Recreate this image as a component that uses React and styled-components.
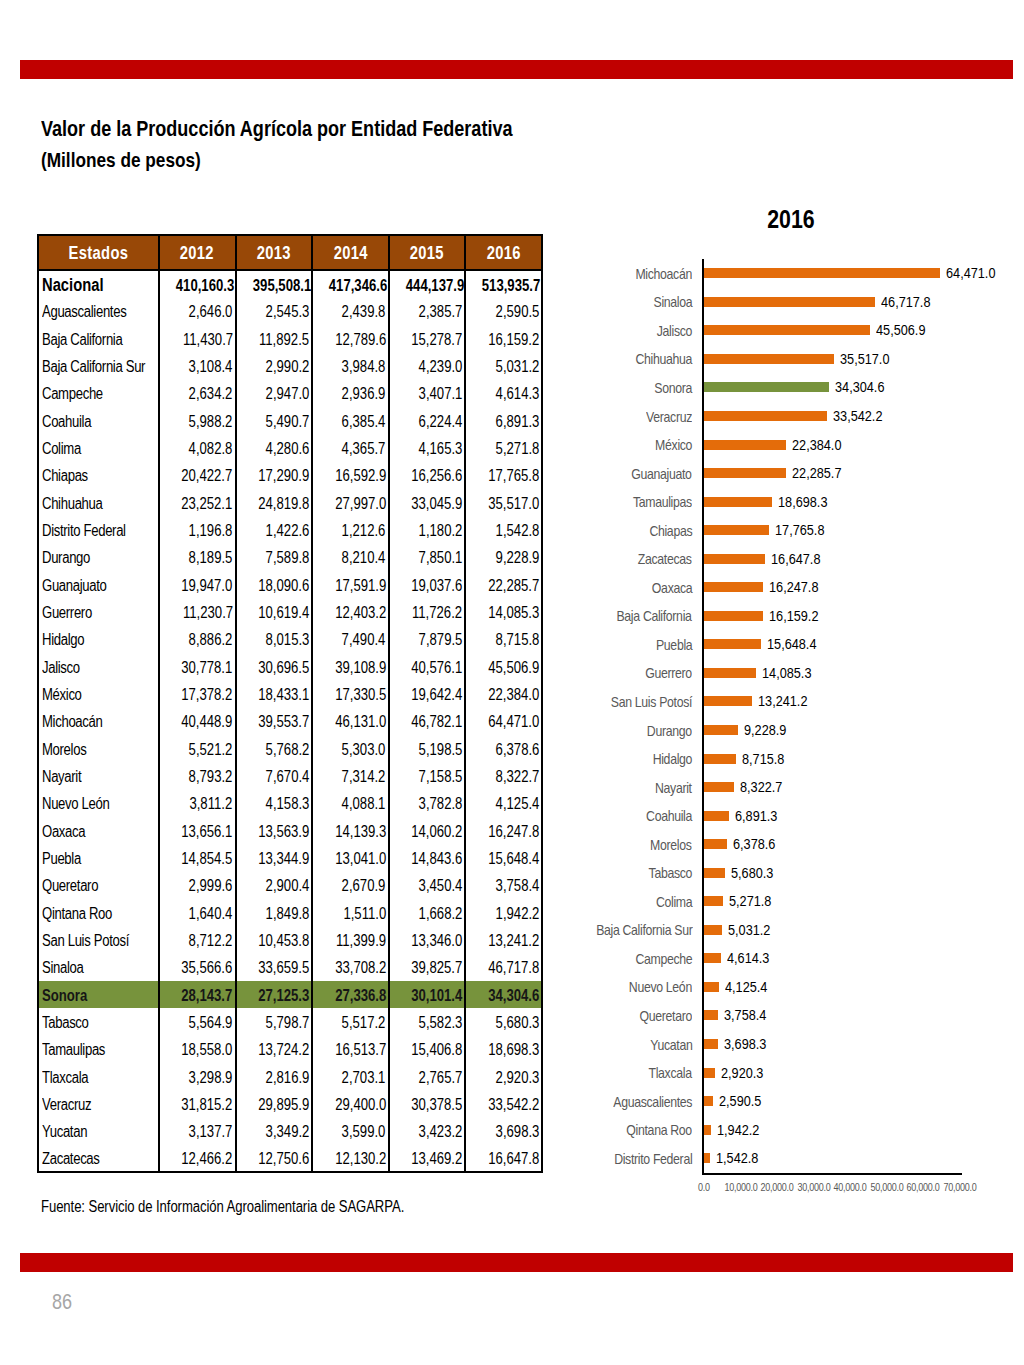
import styled, { createGlobalStyle } from "styled-components";

const rows = [
  ["Aguascalientes", "2,646.0", "2,545.3", "2,439.8", "2,385.7", "2,590.5"],
  ["Baja California", "11,430.7", "11,892.5", "12,789.6", "15,278.7", "16,159.2"],
  ["Baja California Sur", "3,108.4", "2,990.2", "3,984.8", "4,239.0", "5,031.2"],
  ["Campeche", "2,634.2", "2,947.0", "2,936.9", "3,407.1", "4,614.3"],
  ["Coahuila", "5,988.2", "5,490.7", "6,385.4", "6,224.4", "6,891.3"],
  ["Colima", "4,082.8", "4,280.6", "4,365.7", "4,165.3", "5,271.8"],
  ["Chiapas", "20,422.7", "17,290.9", "16,592.9", "16,256.6", "17,765.8"],
  ["Chihuahua", "23,252.1", "24,819.8", "27,997.0", "33,045.9", "35,517.0"],
  ["Distrito Federal", "1,196.8", "1,422.6", "1,212.6", "1,180.2", "1,542.8"],
  ["Durango", "8,189.5", "7,589.8", "8,210.4", "7,850.1", "9,228.9"],
  ["Guanajuato", "19,947.0", "18,090.6", "17,591.9", "19,037.6", "22,285.7"],
  ["Guerrero", "11,230.7", "10,619.4", "12,403.2", "11,726.2", "14,085.3"],
  ["Hidalgo", "8,886.2", "8,015.3", "7,490.4", "7,879.5", "8,715.8"],
  ["Jalisco", "30,778.1", "30,696.5", "39,108.9", "40,576.1", "45,506.9"],
  ["México", "17,378.2", "18,433.1", "17,330.5", "19,642.4", "22,384.0"],
  ["Michoacán", "40,448.9", "39,553.7", "46,131.0", "46,782.1", "64,471.0"],
  ["Morelos", "5,521.2", "5,768.2", "5,303.0", "5,198.5", "6,378.6"],
  ["Nayarit", "8,793.2", "7,670.4", "7,314.2", "7,158.5", "8,322.7"],
  ["Nuevo León", "3,811.2", "4,158.3", "4,088.1", "3,782.8", "4,125.4"],
  ["Oaxaca", "13,656.1", "13,563.9", "14,139.3", "14,060.2", "16,247.8"],
  ["Puebla", "14,854.5", "13,344.9", "13,041.0", "14,843.6", "15,648.4"],
  ["Queretaro", "2,999.6", "2,900.4", "2,670.9", "3,450.4", "3,758.4"],
  ["Qintana Roo", "1,640.4", "1,849.8", "1,511.0", "1,668.2", "1,942.2"],
  ["San Luis Potosí", "8,712.2", "10,453.8", "11,399.9", "13,346.0", "13,241.2"],
  ["Sinaloa", "35,566.6", "33,659.5", "33,708.2", "39,825.7", "46,717.8"],
  ["Sonora", "28,143.7", "27,125.3", "27,336.8", "30,101.4", "34,304.6"],
  ["Tabasco", "5,564.9", "5,798.7", "5,517.2", "5,582.3", "5,680.3"],
  ["Tamaulipas", "18,558.0", "13,724.2", "16,513.7", "15,406.8", "18,698.3"],
  ["Tlaxcala", "3,298.9", "2,816.9", "2,703.1", "2,765.7", "2,920.3"],
  ["Veracruz", "31,815.2", "29,895.9", "29,400.0", "30,378.5", "33,542.2"],
  ["Yucatan", "3,137.7", "3,349.2", "3,599.0", "3,423.2", "3,698.3"],
  ["Zacatecas", "12,466.2", "12,750.6", "12,130.2", "13,469.2", "16,647.8"],
];

const years = ["2012", "2013", "2014", "2015", "2016"];
const nacional = ["410,160.3", "395,508.1", "417,346.6", "444,137.9", "513,935.7"];

const bars = rows
  .map((r) => ({ name: r[0], label: r[5], value: parseFloat(r[5].replace(/,/g, "")) }))
  .sort((a, b) => b.value - a.value);

const ticks = ["0.0", "10,000.0", "20,000.0", "30,000.0", "40,000.0", "50,000.0", "60,000.0", "70,000.0"];
const MAX = 70000;
const PLOT_W = 256;

const GlobalStyle = createGlobalStyle`
  html, body { margin: 0; padding: 0; background: #fff; }
  body { font-family: "Liberation Sans", Arial, sans-serif; color: #000; }
`;

// Arial Narrow look: Arial squeezed horizontally
const Narrow = styled.span`
  display: inline-block;
  white-space: nowrap;
  transform: scaleX(0.82);
  transform-origin: ${(p) => p.$o || "left"} center;
`;

const Page = styled.div`
  width: 1024px;
  height: 1365px;
  padding-top: 60px;
  box-sizing: border-box;
`;

const RedBand = styled.div`
  margin-left: 20px;
  margin-top: ${(p) => p.$gap || 0}px;
  width: 993px;
  height: 19px;
  background: #c00000;
`;

const Heading = styled.header`
  padding: 37px 0 0 41px;
  h1 {
    margin: 0;
    font-size: 22px;
    line-height: 26px;
    font-weight: 700;
  }
  h2 {
    margin: 5px 0 0;
    font-size: 21px;
    line-height: 26px;
    font-weight: 700;
  }
`;

const Body = styled.div`
  display: flex;
  align-items: flex-start;
  gap: 47px;
  padding-left: 37px;
  margin-top: 30px;
`;

const TableCol = styled.div`
  padding-top: 31px;
  width: 506px;
`;

const Table = styled.table`
  width: 506px;
  border-collapse: collapse;
  border: 2px solid #000;
  table-layout: fixed;
  th {
    box-sizing: border-box;
    height: 35px;
    background: #984807;
    color: #fff;
    font-size: 18px;
    font-weight: 700;
    text-align: center;
    border: 2px solid #000;
    padding: 2px 0 0;
    letter-spacing: 0.4px;
  }
  td {
    box-sizing: border-box;
    height: 27.33px;
    padding: 3px 2px 0 3px;
    border-left: 2px solid #000;
    border-right: 2px solid #000;
    font-size: 16px;
    text-align: right;
    white-space: nowrap;
  }
  td:first-child {
    text-align: left;
  }
`;

const Row = styled.tr`
  background: ${(p) => (p.$green ? "#77933c" : "#fff")};
  td {
    font-weight: ${(p) => (p.$bold ? 700 : 400)};
    color: ${(p) => (p.$green ? "#161616" : "#000")};
  }
  td:first-child {
    font-size: ${(p) => (p.$bold && !p.$green ? "18px" : "16px")};
    letter-spacing: ${(p) => (p.$bold ? "0" : "-0.4px")};
  }
`;

const Source = styled.p`
  margin: 25px 0 0 4px;
  font-size: 16px;
  line-height: 18px;
  letter-spacing: -0.1px;
`;

const ChartCol = styled.div`
  width: 410px;
`;

const ChartTitle = styled.div`
  text-align: center;
  font-size: 26px;
  font-weight: 700;
  line-height: 32px;
  width: 402px;
`;

const Plot = styled.div`
  margin-top: 24px;
  display: grid;
  grid-template-columns: 102px 1fr;
  column-gap: 12px;
`;

const Labels = styled.div`
  display: flex;
  flex-direction: column;
`;

const Label = styled.div`
  height: 28.55px;
  display: flex;
  align-items: center;
  justify-content: flex-end;
  font-size: 15px;
  color: #595959;
  letter-spacing: -0.4px;
  white-space: nowrap;
`;

const Area = styled.div`
  width: 258px;
  border-left: 2px solid #000;
  border-bottom: 2px solid #000;
  margin-left: -2px;
  display: flex;
  flex-direction: column;
`;

const BarRow = styled.div`
  height: 28.55px;
  display: flex;
  align-items: center;
  gap: 6px;
`;

const Bar = styled.div`
  height: 10px;
  flex: none;
  background: ${(p) => (p.$hl ? "#77933c" : "#e46c0a")};
`;

const Value = styled.span`
  font-size: 15.5px;
  white-space: nowrap;
`;

const Axis = styled.div`
  margin-left: 114px;
  width: 258px;
  position: relative;
  height: 24px;
`;

const Tick = styled.span`
  position: absolute;
  top: 6px;
  transform: translateX(-50%) scaleX(0.82);
  font-size: 11px;
  color: #595959;
  letter-spacing: -0.3px;
  white-space: nowrap;
`;

const PageNum = styled.div`
  margin: 17px 0 0 52px;
  font-size: 22px;
  line-height: 26px;
  color: #a6a6a6;
`;

export default function App() {
  return (
    <Page>
      <GlobalStyle />
      <RedBand />
      <Heading>
        <h1>
          <Narrow>Valor de la Producción Agrícola por Entidad Federativa</Narrow>
        </h1>
        <h2>
          <Narrow>(Millones de pesos)</Narrow>
        </h2>
      </Heading>
      <Body>
        <TableCol>
          <Table>
            <colgroup>
              <col style={{ width: 121 }} />
              <col />
              <col />
              <col />
              <col />
              <col />
            </colgroup>
            <thead>
              <tr>
                <th>
                  <Narrow $o="center">Estados</Narrow>
                </th>
                {years.map((y) => (
                  <th key={y}>
                    <Narrow $o="center">{y}</Narrow>
                  </th>
                ))}
              </tr>
            </thead>
            <tbody>
              <Row $bold>
                <td>
                  <Narrow>Nacional</Narrow>
                </td>
                {nacional.map((v) => (
                  <td key={v}>
                    <Narrow $o="right">{v}</Narrow>
                  </td>
                ))}
              </Row>
              {rows.map((r) => (
                <Row key={r[0]} $bold={r[0] === "Sonora"} $green={r[0] === "Sonora"}>
                  {r.map((c, i) => (
                    <td key={i}>
                      <Narrow $o={i === 0 ? "left" : "right"}>{c}</Narrow>
                    </td>
                  ))}
                </Row>
              ))}
            </tbody>
          </Table>
          <Source>
            <Narrow>Fuente: Servicio de Información Agroalimentaria de SAGARPA.</Narrow>
          </Source>
        </TableCol>
        <ChartCol>
          <ChartTitle>
            <Narrow $o="center">2016</Narrow>
          </ChartTitle>
          <Plot>
            <Labels>
              {bars.map((b) => (
                <Label key={b.name}>
                  <Narrow $o="right">{b.name}</Narrow>
                </Label>
              ))}
            </Labels>
            <Area>
              {bars.map((b) => (
                <BarRow key={b.name}>
                  <Bar $hl={b.name === "Sonora"} style={{ width: (b.value / MAX) * PLOT_W }} />
                  <Value>
                    <Narrow>{b.label}</Narrow>
                  </Value>
                </BarRow>
              ))}
            </Area>
          </Plot>
          <Axis>
            {ticks.map((t, i) => (
              <Tick key={t} style={{ left: (i * PLOT_W) / 7 }}>
                {t}
              </Tick>
            ))}
          </Axis>
        </ChartCol>
      </Body>
      <RedBand $gap={37} />
      <PageNum>
        <Narrow>86</Narrow>
      </PageNum>
    </Page>
  );
}
